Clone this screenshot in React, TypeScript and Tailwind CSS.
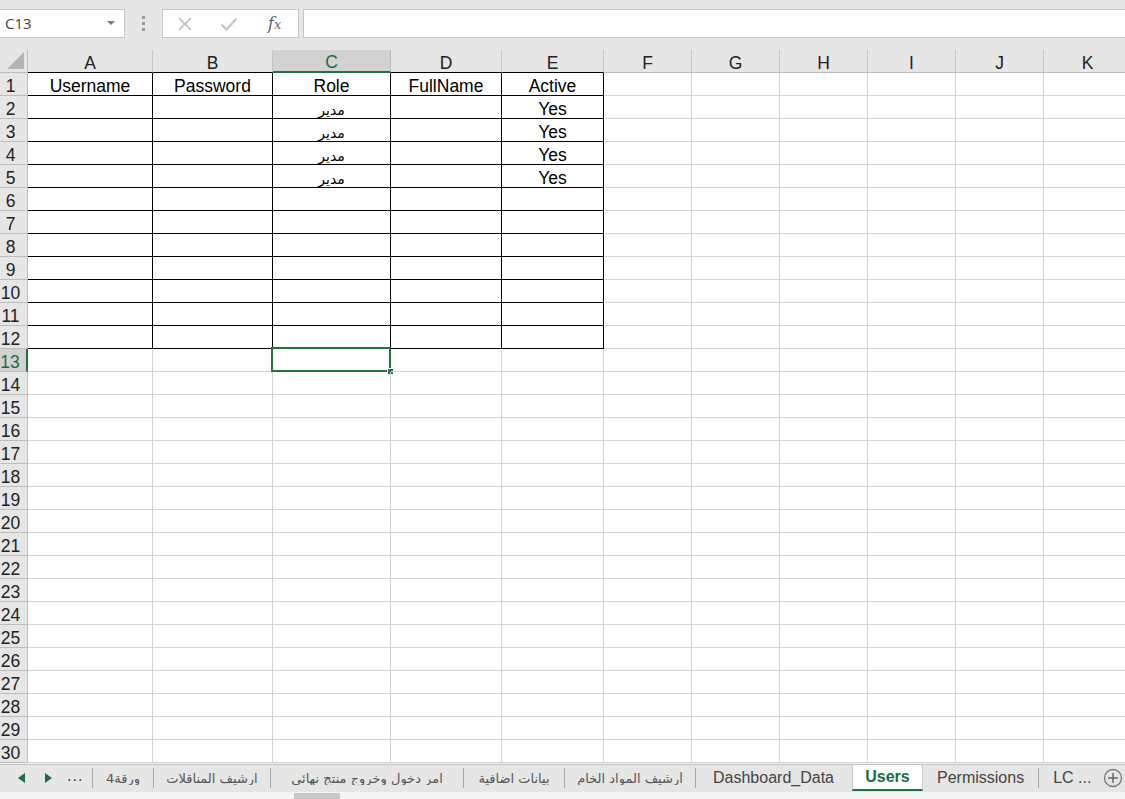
import React from "react";

const COLS = [
  { key: "A", w: "w-[125px]" },
  { key: "B", w: "w-[120px]" },
  { key: "C", w: "w-[118px]" },
  { key: "D", w: "w-[111px]" },
  { key: "E", w: "w-[102px]" },
  { key: "F", w: "w-[88px]" },
  { key: "G", w: "w-[88px]" },
  { key: "H", w: "w-[88px]" },
  { key: "I", w: "w-[88px]" },
  { key: "J", w: "w-[88px]" },
  { key: "K", w: "w-[88px]" },
];

const HEADERS = ["Username", "Password", "Role", "FullName", "Active"];
const ARABIC = "مدير";

function cellValue(row: number, col: number) {
  if (row === 1 && col < 5) return HEADERS[col];
  if (row >= 2 && row <= 5) {
    if (col === 2) return ARABIC;
    if (col === 4) return "Yes";
  }
  return "";
}

function TopBar() {
  return (
    <div className="h-[50px] bg-[#e6e6e6] flex items-start pt-[9px]">
      <div className="w-[125px] h-[29px] bg-white border border-l-0 border-[#c6c6c6] flex items-center justify-between pl-[5px] pr-[9px]">
        <span className="text-[15px] text-[#444] font-['Open_Sans',sans-serif]">C13</span>
        <svg width="8" height="5" viewBox="0 0 8 5">
          <path d="M0 0h8L4 4z" fill="#777" />
        </svg>
      </div>
      <div className="w-[37px] h-[29px] flex flex-col items-center justify-center gap-[3px]">
        <span className="w-[3px] h-[3px] bg-[#9a9a9a]" />
        <span className="w-[3px] h-[3px] bg-[#9a9a9a]" />
        <span className="w-[3px] h-[3px] bg-[#9a9a9a]" />
      </div>
      <div className="w-[137px] h-[29px] bg-white border border-[#c6c6c6] flex items-center">
        <div className="w-[44px] flex justify-center">
          <svg width="16" height="16" viewBox="0 0 16 16">
            <path d="M2 2l12 12M14 2L2 14" stroke="#c8c8c8" strokeWidth="1.8" />
          </svg>
        </div>
        <div className="w-[44px] flex justify-center">
          <svg width="18" height="16" viewBox="0 0 18 16">
            <path d="M1.5 8.5l5 5L16.5 2.5" stroke="#c8c8c8" strokeWidth="2.4" fill="none" />
          </svg>
        </div>
        <div className="flex-1 flex justify-center">
          <span className="font-['DejaVu_Serif',serif] italic text-[17px] text-[#666] leading-none">
            f<span className="text-[13px]">x</span>
          </span>
        </div>
      </div>
      <div className="ml-[4px] flex-1 h-[29px] bg-white border border-r-0 border-[#c6c6c6]" />
    </div>
  );
}

function HeaderRow() {
  return (
    <div className="flex h-[23px]">
      <div className="w-[28px] shrink-0 h-full bg-[#e6e6e6] border-r border-b border-[#bdbdbd] flex items-end justify-end p-[3px]">
        <svg width="17" height="17" viewBox="0 0 17 17">
          <path d="M17 0V17H0z" fill="#b4b4b4" />
        </svg>
      </div>
      {COLS.map((c, i) => {
        const selected = c.key === "C";
        const table = i < 5;
        return (
          <div
            key={c.key}
            className={`${c.w} shrink-0 h-full flex items-center justify-center pt-[5px] border-r ${
              selected
                ? "bg-[#d2d2d2] border-[#b7b7b7] border-b-2 border-b-[#217346] text-[#1e6b41]"
                : table
                ? "bg-[#e6e6e6] border-[#c6c6c6] border-b border-b-black text-[#222]"
                : "bg-[#e6e6e6] border-[#c6c6c6] border-b border-b-[#bdbdbd] text-[#222]"
            }`}
          >
            {c.key}
          </div>
        );
      })}
    </div>
  );
}

function GridRow({ row }: { row: number }) {
  const sel = row === 13;
  return (
    <div className="flex h-[23px]">
      <div
        className={`w-[28px] shrink-0 h-full border-b flex items-center pt-[5px] pl-[1px] pr-[7px] justify-center ${
          sel
            ? "bg-[#d2d2d2] border-r-2 border-r-[#217346] border-b-[#bdbdbd] text-[#1e6b41]"
            : "bg-[#e6e6e6] border-r border-[#bdbdbd] text-[#222]"
        }`}
      >
        {row}
      </div>
      {COLS.map((c, i) => {
        const table = i < 5 && row <= 12;
        const v = cellValue(row, i);
        const isArabic = v === ARABIC;
        return (
          <div
            key={c.key}
            className={`${c.w} shrink-0 h-full relative flex items-center justify-center pt-[5px] border-r border-b ${
              table ? "border-black" : "border-[#d4d4d4]"
            }`}
          >
            {isArabic ? (
              <span dir="rtl" className="text-[14px] font-['DejaVu_Sans',sans-serif] text-black">
                {v}
              </span>
            ) : (
              <span className="text-black">{v}</span>
            )}
            {sel && c.key === "C" && (
              <div className="absolute -left-[2px] -top-[2px] -right-[1px] -bottom-[1px] border-2 border-[#217346]">
                <span className="absolute -right-[5px] -bottom-[5px] w-[7px] h-[7px] bg-[#217346] border border-white" />
              </div>
            )}
          </div>
        );
      })}
    </div>
  );
}

const TABS_LEFT = [
  { t: "ورقة4", w: "w-[61px]" },
  { t: "ارشيف المناقلات", w: "w-[117px]" },
  { t: "امر دخول وخروج منتج نهائي", w: "w-[193px]" },
  { t: "بيانات اضافية", w: "w-[101px]" },
  { t: "أرشيف المواد الخام", w: "w-[131px]" },
];

function TabBar() {
  return (
    <div className="h-[36px] bg-[#e6e6e6] flex flex-col">
      <div className="h-[2px] bg-[#f0f0f0] border-b border-[#c6c6c6]" />
      <div className="h-[26px] flex items-stretch text-[16px] text-[#444] font-['Liberation_Sans','DejaVu_Sans',sans-serif]">
        <div className="w-[92px] shrink-0 flex items-center">
          <svg className="ml-[18px]" width="7" height="10" viewBox="0 0 7 10">
            <path d="M7 0V10L0 5z" fill="#1e6b41" />
          </svg>
          <svg className="ml-[20px]" width="7" height="10" viewBox="0 0 7 10">
            <path d="M0 0V10L7 5z" fill="#1e6b41" />
          </svg>
          <span className="ml-[15px] text-[#333] tracking-[1px] leading-none pb-[4px]">...</span>
        </div>
        {TABS_LEFT.map((t) => (
          <div key={t.t} className={`${t.w} shrink-0 flex items-center`}>
            <span className="w-px h-[20px] bg-[#a8a8a8] shrink-0" />
            <span
              dir="rtl"
              className="flex-1 text-center whitespace-nowrap overflow-hidden text-[13px] text-[#555] font-['DejaVu_Sans',sans-serif]"
            >
              {t.t}
            </span>
          </div>
        ))}
        <div className="w-[157px] shrink-0 flex items-center">
          <span className="w-px h-[20px] bg-[#a8a8a8] shrink-0" />
          <span className="pl-[17px] whitespace-nowrap">Dashboard_Data</span>
        </div>
        <div className="w-[71px] shrink-0 flex items-center justify-center bg-white border-x border-[#c6c6c6] border-b-2 border-b-[#217346]">
          <span className="font-bold text-[#1e6b41]">Users</span>
        </div>
        <div className="flex items-center">
          <span className="pl-[14px] pr-[14px]">Permissions</span>
          <span className="w-px h-[20px] bg-[#a8a8a8]" />
          <span className="pl-[14px] whitespace-nowrap">LC ...</span>
        </div>
        <div className="ml-auto mr-[2px] flex items-center">
          <svg width="20" height="20" viewBox="0 0 20 20">
            <circle cx="10" cy="10" r="8.5" fill="none" stroke="#777" strokeWidth="1.3" />
            <path d="M10 5v10M5 10h10" stroke="#666" strokeWidth="1.5" />
          </svg>
        </div>
      </div>
      <div className="flex-1 bg-[#f4f4f4] border-t border-dotted border-[#d8d8d8] relative">
        <span className="absolute left-[294px] top-[1px] w-[46px] h-[7px] bg-[#c8c8c8]" />
      </div>
    </div>
  );
}

export default function App() {
  const rows = Array.from({ length: 30 }, (_, i) => i + 1);
  return (
    <div className="w-[1125px] h-[799px] overflow-hidden bg-white font-['Liberation_Sans','DejaVu_Sans',sans-serif] text-[17.5px] leading-none">
      <TopBar />
      <div className="h-[713px] overflow-hidden">
        <HeaderRow />
        {rows.map((r) => (
          <GridRow key={r} row={r} />
        ))}
      </div>
      <TabBar />
    </div>
  );
}
